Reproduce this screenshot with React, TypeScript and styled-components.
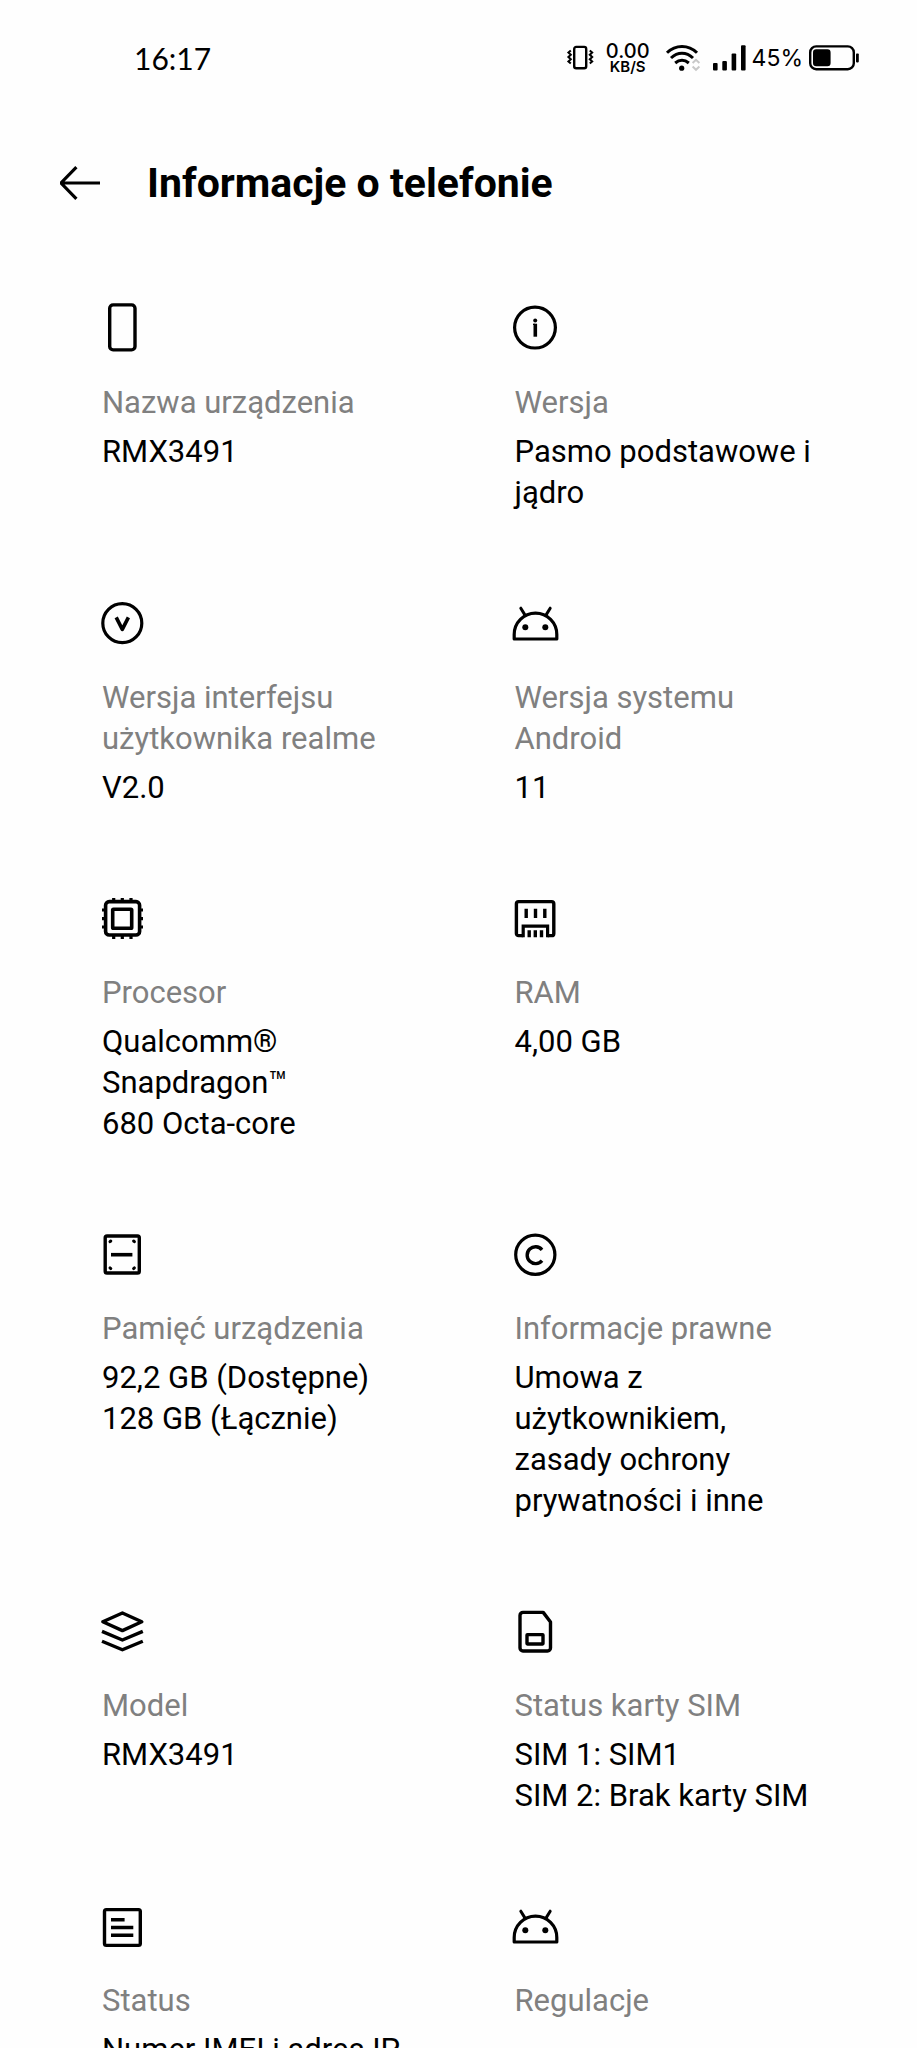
import React from "react";
import styled, { createGlobalStyle } from "styled-components";

const GlobalStyle = createGlobalStyle`
  *, *::before, *::after {
    box-sizing: border-box;
  }
  body {
    margin: 0;
    background: #fefefe;
    color: #000;
    font-family: Roboto, "Liberation Sans", sans-serif;
  }
`;

const Screen = styled.div`
  display: flex;
  flex-direction: column;
  height: 100vh;
  background: #fefefe;
`;

const StatusBar = styled.div`
  flex: none;
  display: flex;
  align-items: center;
  justify-content: space-between;
  height: 116px;
  padding: 0 58px 0 134px;
`;

const Clock = styled.time`
  font: 400 30px/40px Lato, sans-serif;
`;

const Indicators = styled.div`
  display: flex;
  align-items: center;
`;

const Speed = styled.div`
  display: flex;
  flex-direction: column;
  align-items: center;
  margin: 0 16px 0 12px;
  font-family: Inter, sans-serif;
`;

const SpeedValue = styled.span`
  font-size: 20px;
  line-height: 18px;
  font-weight: 500;
`;

const SpeedUnit = styled.span`
  font-size: 15px;
  line-height: 14px;
  font-weight: 600;
`;

const Battery = styled.span`
  margin: 0 6px;
  font: 400 23px/28px Inter, sans-serif;
`;

const Header = styled.header`
  flex: none;
  display: flex;
  align-items: center;
  gap: 47px;
  height: 132px;
  padding: 2px 60px 0;
`;

const BackButton = styled.button`
  display: flex;
  padding: 0;
  border: 0;
  background: none;
  color: inherit;
  cursor: pointer;
`;

const Title = styled.h1`
  margin: 0;
  font-size: 41px;
  line-height: 48px;
  font-weight: 700;
`;

const Main = styled.main`
  flex: 1;
  min-height: 0;
  overflow-y: auto;
  scrollbar-width: none;
`;

const InfoGrid = styled.dl`
  display: grid;
  grid-template-columns: 1fr 1fr;
  row-gap: 86px;
  margin: 0;
  padding: 56px 46px;
`;

const InfoItem = styled.div`
  padding: 0 56px;
  font-size: 31px;
  line-height: 41px;
`;

const Label = styled.dt`
  margin-top: 30px;
  color: #808080;
`;

const Value = styled.dd`
  margin: 8px 0 0;
  white-space: pre-line;
`;

const ItemIcon = styled.svg`
  display: block;
  width: 48px;
  height: 48px;
  margin-left: -4px;
  overflow: visible;
  fill: none;
  stroke: currentColor;
  stroke-width: 3.4px;
`;

const StatusIcon = styled.svg`
  display: block;
  overflow: visible;
`;

const AndroidDrawing = () => (
  <g strokeLinecap="round" strokeLinejoin="round">
    <path d="M3.2 40V35.5C3.2 23.6 12.7 14.2 24.5 14.2S45.8 23.6 45.8 35.5V40Z" strokeWidth="3.2" />
    <path d="M9.8 9.2 13.6 15.4M39.2 9.2 35.4 15.4" strokeWidth="3" />
    <circle cx="14.3" cy="28.2" r="3" fill="currentColor" stroke="none" />
    <circle cx="34.3" cy="28.2" r="3" fill="currentColor" stroke="none" />
  </g>
);

const drawings = {
  phone: <rect x="11.7" y="0.9" width="25.3" height="45" rx="3.4" />,
  info: (
    <>
      <circle cx="24" cy="23.6" r="20.4" strokeWidth="3.2" />
      <circle cx="24.2" cy="16.4" r="2" fill="currentColor" stroke="none" />
      <path d="M24.3 19.7V32.7" strokeWidth="3.6" />
      <path d="M22 20.4H24" strokeWidth="1.4" />
    </>
  ),
  version: (
    <>
      <circle cx="24.3" cy="24.2" r="19.5" strokeWidth="3.2" />
      <path d="M18.2 18.4 24.3 30.4 30.4 18.4" strokeWidth="3.6" strokeLinejoin="round" />
    </>
  ),
  android: <AndroidDrawing />,
  cpu: (
    <>
      <rect x="7.6" y="7.6" width="34" height="33.4" rx="3.6" strokeWidth="3.6" />
      <rect x="14.7" y="15.2" width="19" height="19" rx="0.8" strokeWidth="3.6" />
      <path
        d="M15.7 4V8M24.3 4V8M33 4V8M15.7 41V45M24.3 41V45M33 41V45M4 16H8M4 24.6H8M4 33H8M41 16H45M41 24.6H45M41 33H45"
        strokeWidth="3.2"
      />
    </>
  ),
  ram: (
    <>
      <path d="M12.2 41.6H7.6A2.2 2.2 0 0 1 5.4 39.4V9.8A2.2 2.2 0 0 1 7.6 7.6H40.6A2.2 2.2 0 0 1 42.8 9.8V39.4A2.2 2.2 0 0 1 40.6 41.6H36.6" />
      <path d="M12.2 43.3V32.2H36.6V43.3" strokeWidth="3.2" />
      <path d="M15.2 14.7V24M24.5 14.7V24M33.8 14.7V24M18.2 36.3V43.3M24.3 36.3V43.3M30.5 36.3V43.3" />
    </>
  ),
  storage: (
    <>
      <rect x="7.2" y="6" width="34.1" height="37" rx="1.8" />
      <path d="M13 24.7H34.4" strokeWidth="3.6" />
      <path
        d="M12 11.7 12.8 11M36.4 11.7 35.6 11M12 37.9 12.8 38.6M36.4 37.9 35.6 38.6"
        strokeWidth="3"
        strokeLinecap="round"
      />
    </>
  ),
  copyright: (
    <>
      <circle cx="24.3" cy="24.8" r="19.6" strokeWidth="3.2" />
      <path d="M31 19.8A8.4 8.4 0 1 0 31 30.6" />
    </>
  ),
  layers: (
    <g strokeLinejoin="round" strokeWidth="3.4">
      <path d="M24.4 6 43.8 14.8 24.4 23.6 4.8 14.8Z" />
      <path d="M4 24.4 24.4 33 44.8 24.4M4 34.2 24.4 42.8 44.8 34.2" />
    </g>
  ),
  sim: (
    <>
      <path
        d="M12 5.4H32.2L39.5 15V41A3 3 0 0 1 36.5 44H12A3 3 0 0 1 9 41V8.4A3 3 0 0 1 12 5.4Z"
        strokeLinejoin="round"
      />
      <rect x="16" y="27.6" width="16" height="9.4" rx="0.4" />
    </>
  ),
  document: (
    <>
      <rect x="6.5" y="7.6" width="35.8" height="35.8" rx="1.8" />
      <path d="M13 17.7H26.6M13 25.5H35.3M13 33.3H35.3" />
    </>
  ),
};

type IconName = keyof typeof drawings;

const items: { icon: IconName; label: string; value?: string }[] = [
  { icon: "phone", label: "Nazwa urządzenia", value: "RMX3491" },
  { icon: "info", label: "Wersja", value: "Pasmo podstawowe i jądro" },
  { icon: "version", label: "Wersja interfejsu użytkownika realme", value: "V2.0" },
  { icon: "android", label: "Wersja systemu Android", value: "11" },
  { icon: "cpu", label: "Procesor", value: "Qualcomm® Snapdragon™\n680 Octa-core" },
  { icon: "ram", label: "RAM", value: "4,00 GB" },
  { icon: "storage", label: "Pamięć urządzenia", value: "92,2 GB (Dostępne)\n128 GB (Łącznie)" },
  {
    icon: "copyright",
    label: "Informacje prawne",
    value: "Umowa z użytkownikiem, zasady ochrony prywatności i inne",
  },
  { icon: "layers", label: "Model", value: "RMX3491" },
  { icon: "sim", label: "Status karty SIM", value: "SIM 1: SIM1\nSIM 2: Brak karty SIM" },
  { icon: "document", label: "Status", value: "Numer IMEI i adres IP" },
  { icon: "android", label: "Regulacje" },
];

const VibrateIcon = () => (
  <StatusIcon width="27" height="26" viewBox="0 0 27 26" fill="none" stroke="#000">
    <rect x="7.2" y="1.9" width="12" height="21.4" rx="2" strokeWidth="2.4" />
    <path
      d="M3.8 5.4 1.4 7.6 3.8 9.8 1.4 12 3.8 14.2 1.4 16.4 3.8 18.6M22.8 5.4 25.2 7.6 22.8 9.8 25.2 12 22.8 14.2 25.2 16.4 22.8 18.6"
      strokeWidth="2"
    />
  </StatusIcon>
);

const WifiIcon = () => (
  <StatusIcon width="34" height="26" viewBox="0 0 34 26" fill="none" stroke="#000" strokeWidth="3">
    <path d="M1 7.8C9.6-.6 22.4-.6 31 7.8" />
    <path d="M5 13C11.6 6.6 20.4 6.6 27 13" />
    <path d="M9.2 18C13.4 14.4 18.6 14.4 22.8 18" />
    <circle cx="15.7" cy="23.2" r="2.6" fill="#000" stroke="none" />
    <path d="M26.6 18 30 14.8 33.4 18M26.6 21.6 30 24.8 33.4 21.6" stroke="#c8c8c8" strokeWidth="2" />
  </StatusIcon>
);

const SignalIcon = () => (
  <StatusIcon width="33" height="26" viewBox="0 0 33 26">
    <rect x="0" y="18" width="4.6" height="7.4" rx="1" />
    <rect x="9.3" y="16" width="4.6" height="9.4" rx="1" />
    <rect x="18.6" y="8.4" width="4.6" height="17" rx="1" />
    <rect x="28" y="0.3" width="4.6" height="25.1" rx="1" />
  </StatusIcon>
);

const BatteryIcon = () => (
  <StatusIcon width="50" height="26" viewBox="0 0 50 26">
    <rect x="1.2" y="1.4" width="43.6" height="22.8" rx="6" fill="none" stroke="#000" strokeWidth="2.4" />
    <rect x="4" y="4.3" width="17.6" height="17" rx="3.2" />
    <rect x="47" y="8.4" width="2.8" height="9" rx="0.8" />
  </StatusIcon>
);

const SignalGroup = styled.div`
  margin-left: 13px;
`;

export default function App() {
  return (
    <>
      <GlobalStyle />
      <Screen>
        <StatusBar>
          <Clock>16:17</Clock>
          <Indicators>
            <VibrateIcon />
            <Speed>
              <SpeedValue>0.00</SpeedValue>
              <SpeedUnit>KB/S</SpeedUnit>
            </Speed>
            <WifiIcon />
            <SignalGroup>
              <SignalIcon />
            </SignalGroup>
            <Battery>45%</Battery>
            <BatteryIcon />
          </Indicators>
        </StatusBar>
        <Header>
          <BackButton type="button" aria-label="Wstecz">
            <svg width="40" height="34" viewBox="0 0 40 34" fill="none" stroke="currentColor" strokeWidth="3.2">
              <path d="M1 17H40M16.4 1.2 1 17 16.4 32.8" strokeLinejoin="round" />
            </svg>
          </BackButton>
          <Title>Informacje o telefonie</Title>
        </Header>
        <Main>
          <InfoGrid>
            {items.map(({ icon, label, value }) => (
              <InfoItem key={label}>
                <ItemIcon viewBox="0 0 48 48" aria-hidden="true">
                  {drawings[icon]}
                </ItemIcon>
                <Label>{label}</Label>
                {value && <Value>{value}</Value>}
              </InfoItem>
            ))}
          </InfoGrid>
        </Main>
      </Screen>
    </>
  );
}
